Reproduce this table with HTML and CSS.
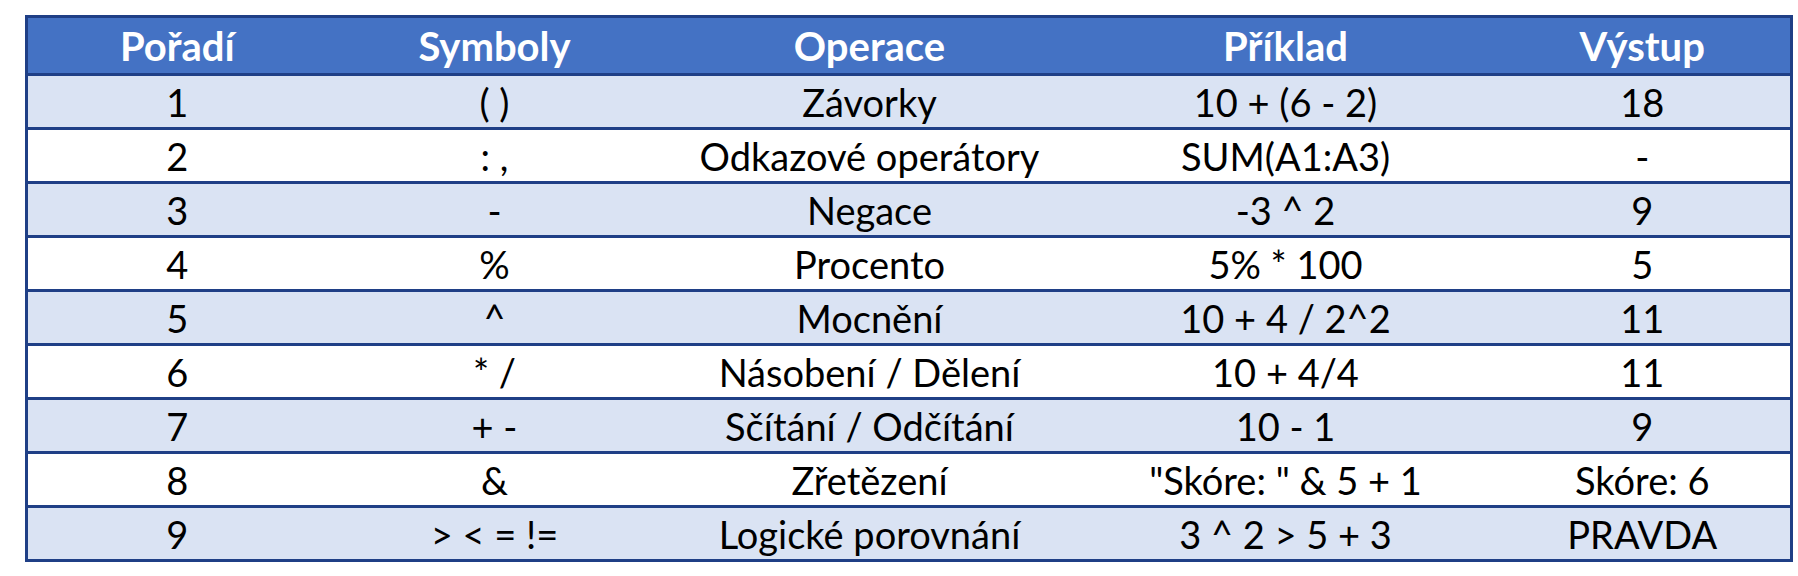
FILE: index.html
```html
<!DOCTYPE html>
<html lang="cs">
<head>
<meta charset="utf-8">
<title>Pořadí operátorů</title>
<link rel="stylesheet" href="styles.css">
</head>
<body>
<table class="ops">
  <colgroup>
    <col class="c1"><col class="c2"><col class="c3"><col class="c4"><col class="c5">
  </colgroup>
  <thead>
    <tr><th>Pořadí</th><th>Symboly</th><th>Operace</th><th>Příklad</th><th>Výstup</th></tr>
  </thead>
  <tbody>
    <tr><td>1</td><td>( )</td><td>Závorky</td><td>10 + (6 - 2)</td><td>18</td></tr>
    <tr><td>2</td><td>: ,</td><td>Odkazové operátory</td><td>SUM(A1:A3)</td><td>-</td></tr>
    <tr><td>3</td><td>-</td><td>Negace</td><td>-3 ^ 2</td><td>9</td></tr>
    <tr><td>4</td><td>%</td><td>Procento</td><td>5% * 100</td><td>5</td></tr>
    <tr><td>5</td><td>^</td><td>Mocnění</td><td>10 + 4 / 2^2</td><td>11</td></tr>
    <tr><td>6</td><td>* /</td><td>Násobení / Dělení</td><td>10 + 4/4</td><td>11</td></tr>
    <tr><td>7</td><td>+ -</td><td>Sčítání / Odčítání</td><td>10 - 1</td><td>9</td></tr>
    <tr><td>8</td><td>&amp;</td><td>Zřetězení</td><td>"Skóre: " &amp; 5 + 1</td><td>Skóre: 6</td></tr>
    <tr><td>9</td><td>&gt; &lt; = !=</td><td>Logické porovnání</td><td>3 ^ 2 &gt; 5 + 3</td><td>PRAVDA</td></tr>
  </tbody>
</table>
</body>
</html>
```

FILE: styles.css
```css
html, body {
  margin: 0;
  padding: 0;
  background: #ffffff;
}
body {
  padding: 15px 0 0 25px;
  font-family: "Lato", "Open Sans", "Liberation Sans", sans-serif;
}
.ops {
  border-collapse: collapse;
  width: 1765px;
  table-layout: fixed;
  border: 3px solid #1f3f86;
}
.c1 { width: 300px; }
.c2 { width: 336px; }
.c3 { width: 414px; }
.c4 { width: 418px; }
.c5 { width: 297px; }
.ops th, .ops td {
  text-align: center;
  padding: 0;
  white-space: nowrap;
}
.ops th {
  background: #4472c4;
  color: #ffffff;
  font-weight: 700;
  font-size: 40px;
  line-height: 1;
  height: 55px;
  border-bottom: 3px solid #1f3f86;
}
.ops td {
  color: #000000;
  font-size: 38px;
  line-height: 1;
  height: 51px;
  border-bottom: 3px solid #1f3f86;
}
.ops tbody tr:nth-child(odd) td {
  background: #dae3f3;
}
.ops tbody tr:nth-child(even) td {
  background: #ffffff;
}
```
